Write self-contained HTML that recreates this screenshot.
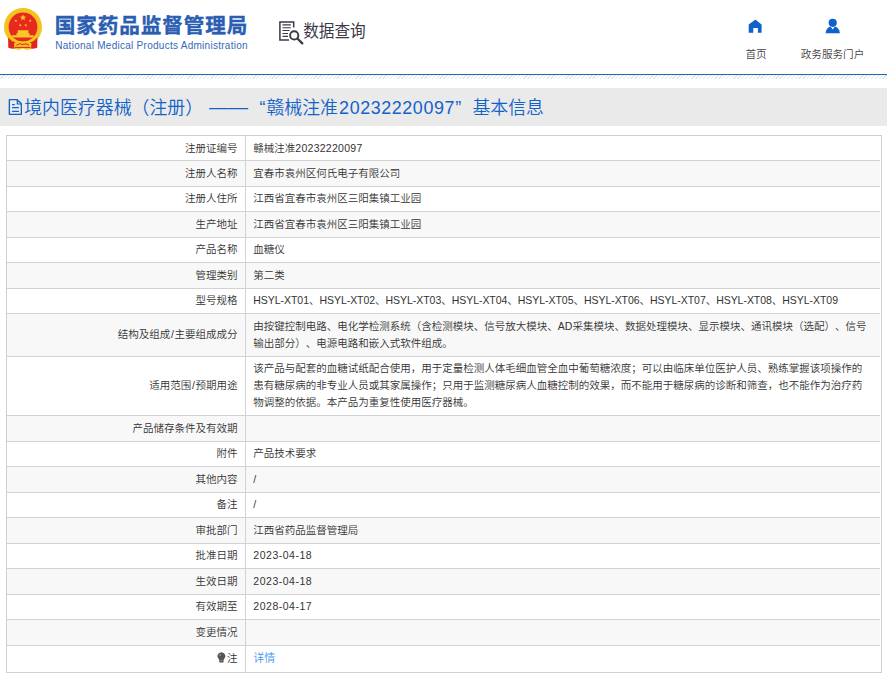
<!DOCTYPE html>
<html lang="zh-CN">
<head>
<meta charset="utf-8">
<title>境内医疗器械（注册）基本信息</title>
<style>
html,body{margin:0;padding:0;background:#fff;}
body{width:887px;height:678px;position:relative;overflow:hidden;font-family:"Liberation Sans","Noto Sans CJK SC",sans-serif;color:#333;text-spacing-trim:space-all;}
.abs{position:absolute;white-space:nowrap;}
#title{left:54.8px;top:10.4px;font-size:20.6px;line-height:32px;font-weight:bold;-webkit-text-stroke:0.4px #2a5eb2;color:#2a5eb2;letter-spacing:0.9px;}
#sub{left:55.3px;top:39.9px;font-size:10px;line-height:12px;color:#3468b8;letter-spacing:0.27px;}
#dq{left:303.2px;top:20px;font-size:15.65px;line-height:23px;color:#3a3a46;transform-origin:0 50%;transform:scaleY(1.09);}
.nav{font-size:10.6px;line-height:14px;color:#444;text-align:center;font-weight:350;}
#blue{left:0;top:73.7px;width:887px;height:1.5px;background:#1766c4;}
#hatch{left:0;top:75.2px;width:887px;height:3.9px;background:repeating-linear-gradient(135deg,#e5e5e5 0,#e5e5e5 0.95px,#fff 0.95px,#fff 2.7px);}
#band{left:0;top:87.7px;width:887px;height:37.9px;background:#eaeaea;}
#h1{left:0;top:93.8px;width:887px;height:28px;font-size:17.9px;line-height:28px;color:#1162c9;font-weight:350;margin:0;}
.hp{position:absolute;top:0;white-space:nowrap;}
.dash{top:-1.3px;display:inline-block;transform-origin:0 50%;transform:scaleX(1.092);}
.dg{letter-spacing:0.59px;}
#tbl{left:6.2px;top:134.95px;width:875.4px;height:537.8px;box-sizing:border-box;border:1.1px solid #cfcfcf;}
.r{position:absolute;left:7px;width:873px;display:flex;align-items:center;font-size:10.5px;line-height:17.2px;color:#333;font-weight:350;}
.k{width:238px;box-sizing:border-box;padding-right:7.5px;text-align:right;white-space:nowrap;}
.v{flex:1;padding-left:8.3px;white-space:nowrap;}
.hl{position:absolute;left:7px;width:873px;height:1.1px;background:#d2d2d2;}
#vl{left:244.95px;top:136px;width:1.15px;height:536px;background:#d2d2d2;}
.lnk{color:#3f97f2;font-size:11px;}
.dt{letter-spacing:0.52px;}
.d1{letter-spacing:0.27px;}
.hs{letter-spacing:-0.04px;}
.sl{margin:0 0.7px;}
.bulb{display:inline-block;vertical-align:-1.1px;margin-right:0.8px;}
</style>
</head>
<body>
<!-- header -->
<svg class="abs" style="left:0;top:4px" width="50" height="50" viewBox="0 0 50 50">
  <circle cx="23" cy="23" r="19" fill="#f4c31e"/>
  <circle cx="23" cy="23" r="14.4" fill="#e8291f"/>
  <path d="M17.7 26.2 H28.4 V29.1 H29.5 V31.3 H33.5 V33.5 H12.2 V31.3 H16.6 V29.1 H17.7Z" fill="#f6c927"/>
  <path d="M23 10.3 l.85 2.25 2.4 .1 -1.9 1.5 .65 2.3 -2-1.35 -2 1.35 .65-2.3 -1.9-1.5 2.4-.1z" fill="#f6c927"/>
  <path id="s" d="M15.9 15.3 l.4 1 1.1 .05 -.85 .7 .3 1.05 -.95-.6 -.95 .6 .3-1.05 -.85-.7 1.1-.05z" fill="#f6c927"/>
  <path d="M30.2 15.3 l.4 1 1.1 .05 -.85 .7 .3 1.05 -.95-.6 -.95 .6 .3-1.05 -.85-.7 1.1-.05z M20.3 19.7 l.4 1 1.1 .05 -.85 .7 .3 1.05 -.95-.6 -.95 .6 .3-1.05 -.85-.7 1.1-.05z M25.8 19.7 l.4 1 1.1 .05 -.85 .7 .3 1.05 -.95-.6 -.95 .6 .3-1.05 -.85-.7 1.1-.05z" fill="#f6c927"/>
  <path d="M8.1 33.6 Q11 37.4 15.5 38.6 L15.5 44.6 Q11.5 45 8.3 43.8Z M37.4 33.6 Q34.5 37.4 30 38.6 L30 44.6 Q34 45 37.2 43.8Z" fill="#e0251d"/>
  <path d="M14 39.5 Q18 36 22.8 37.8 Q27.5 36 31.5 39.5 L31 45.2 L26 45.7 L22.8 44.6 L19.5 45.7 L14.5 45.2Z" fill="#f4c31e"/>
  <path d="M16.5 41.2 Q19.5 38.6 22.8 40.6 Q26 38.6 29 41.2 M15 43.4 H30.5" stroke="#e0251d" stroke-width="1" fill="none"/>
</svg>
<div id="title" class="abs">国家药品监督管理局</div>
<div id="sub" class="abs">National Medical Products Administration</div>

<svg class="abs" style="left:278px;top:20px" width="27" height="26" viewBox="0 0 27 26" fill="none" stroke="#3a3a48">
  <path d="M15.7 7.5 V1.9 H1.9 V20 H11" stroke-width="1.5"/>
  <path d="M4.5 4.9 H12.8 M4.5 7.7 H12.8 M4.5 10.5 H11.5 M4.5 13.5 H10 M4.5 16.4 H10" stroke-width="1.1"/>
  <circle cx="16.2" cy="15.4" r="4.1" stroke-width="1.9" fill="#fff"/>
  <path d="M19.6 18.8 L24.3 23.4" stroke-width="2.3" stroke-linecap="round"/>
</svg>
<div id="dq" class="abs">数据查询</div>

<svg class="abs" style="left:748px;top:19px" width="15" height="14" viewBox="0 0 15 14">
  <path d="M7.4 0.7 Q7.6 0.7 8 1 L13.6 5.6 V13.7 H9.9 V8.9 H5.3 V13.7 H0.7 V5.6 L6.8 1 Q7.2 0.7 7.4 0.7Z" fill="#0f62c9"/>
</svg>
<div class="abs nav" style="left:735px;top:47px;width:42px">首页</div>
<svg class="abs" style="left:825px;top:18px" width="16" height="16" viewBox="0 0 16 16">
  <circle cx="7.7" cy="4.8" r="4.1" fill="#0f62c9"/>
  <path d="M0.6 15.2 Q1.2 9.6 5.6 8.6 L7.7 11.4 L9.8 8.6 Q14.2 9.6 14.9 15.2Z" fill="#0f62c9"/>
</svg>
<div class="abs nav" style="left:792px;top:47px;width:81px">政务服务门户</div>

<div id="blue" class="abs"></div>
<div id="hatch" class="abs"></div>
<div id="band" class="abs"></div>
<svg class="abs" style="left:8px;top:98px" width="16" height="18" viewBox="0 0 16 18" fill="none" stroke="#1162c9">
  <path d="M1.35 1.65 H9.2 L13.35 5.7 V16.35 H1.35Z" stroke-width="1.35" stroke-linejoin="round"/>
  <path d="M9.3 1.8 V6 H13.3" stroke-width="1.2"/>
  <path d="M4.1 6.5 H6.8 M4.1 9.5 H10.9 M4.1 13.4 H10.9" stroke-width="1.25"/>
</svg>
<h1 id="h1" class="abs"><span class="hp" style="left:24.2px">境内医疗器械（注册）</span><span class="hp dash" style="left:209.4px">——</span><span class="hp" style="left:259.4px">“</span><span class="hp" style="left:266.4px">赣械注准</span><span class="hp dg" style="left:339.1px">20232220097</span><span class="hp" style="left:455.2px">”</span><span class="hp" style="left:472.4px">基本信息</span></h1>

<!-- table -->
<div id="tbl" class="abs"></div>
<div class="r" style="top:135.95px;height:24.4px;background:#fff"><div class="k">注册证编号</div><div class="v">赣械注准<span class="d1">20232220097</span></div></div>
<div class="hl" style="top:160.35px"></div>
<div class="r" style="top:161.35px;height:24.45px;background:#f8f8f8"><div class="k">注册人名称</div><div class="v">宜春市袁州区何氏电子有限公司</div></div>
<div class="hl" style="top:185.8px"></div>
<div class="r" style="top:186.8px;height:24.35px;background:#fff"><div class="k">注册人住所</div><div class="v">江西省宜春市袁州区三阳集镇工业园</div></div>
<div class="hl" style="top:211.15px"></div>
<div class="r" style="top:212.15px;height:24.5px;background:#f8f8f8"><div class="k">生产地址</div><div class="v">江西省宜春市袁州区三阳集镇工业园</div></div>
<div class="hl" style="top:236.65px"></div>
<div class="r" style="top:237.65px;height:24.4px;background:#fff"><div class="k">产品名称</div><div class="v">血糖仪</div></div>
<div class="hl" style="top:262.05px"></div>
<div class="r" style="top:263.05px;height:24.5px;background:#f8f8f8"><div class="k">管理类别</div><div class="v">第二类</div></div>
<div class="hl" style="top:287.55px"></div>
<div class="r" style="top:288.55px;height:24.35px;background:#fff"><div class="k">型号规格</div><div class="v"><span class="hs">HSYL-XT01、HSYL-XT02、HSYL-XT03、HSYL-XT04、HSYL-XT05、HSYL-XT06、HSYL-XT07、HSYL-XT08、HSYL-XT09</span></div></div>
<div class="hl" style="top:312.9px"></div>
<div class="r" style="top:313.9px;height:41.95px;background:#f8f8f8"><div class="k">结构及组成<span class="sl">/</span>主要组成成分</div><div class="v">由按键控制电路、电化学检测系统（含检测模块、信号放大模块、AD采集模块、数据处理模块、显示模块、通讯模块（选配）、信号<br>输出部分）、电源电路和嵌入式软件组成。</div></div>
<div class="hl" style="top:355.85px"></div>
<div class="r" style="top:356.85px;height:57.95px;background:#fff"><div class="k">适用范围<span class="sl">/</span>预期用途</div><div class="v">该产品与配套的血糖试纸配合使用，用于定量检测人体毛细血管全血中葡萄糖浓度；可以由临床单位医护人员、熟练掌握该项操作的<br>患有糖尿病的非专业人员或其家属操作；只用于监测糖尿病人血糖控制的效果，而不能用于糖尿病的诊断和筛查，也不能作为治疗药<br>物调整的依据。本产品为重复性使用医疗器械。</div></div>
<div class="hl" style="top:414.8px"></div>
<div class="r" style="top:415.8px;height:24.85px;background:#f8f8f8"><div class="k">产品储存条件及有效期</div><div class="v"></div></div>
<div class="hl" style="top:440.65px"></div>
<div class="r" style="top:441.65px;height:24.3px;background:#fff"><div class="k">附件</div><div class="v">产品技术要求</div></div>
<div class="hl" style="top:465.95px"></div>
<div class="r" style="top:466.95px;height:24.8px;background:#f8f8f8"><div class="k">其他内容</div><div class="v">/</div></div>
<div class="hl" style="top:491.75px"></div>
<div class="r" style="top:492.75px;height:24.2px;background:#fff"><div class="k">备注</div><div class="v">/</div></div>
<div class="hl" style="top:516.95px"></div>
<div class="r" style="top:517.95px;height:24.9px;background:#f8f8f8"><div class="k">审批部门</div><div class="v">江西省药品监督管理局</div></div>
<div class="hl" style="top:542.85px"></div>
<div class="r" style="top:543.85px;height:24.1px;background:#fff"><div class="k">批准日期</div><div class="v"><span class="dt">2023-04-18</span></div></div>
<div class="hl" style="top:567.95px"></div>
<div class="r" style="top:568.95px;height:24.8px;background:#f8f8f8"><div class="k">生效日期</div><div class="v"><span class="dt">2023-04-18</span></div></div>
<div class="hl" style="top:593.75px"></div>
<div class="r" style="top:594.75px;height:24.1px;background:#fff"><div class="k">有效期至</div><div class="v"><span class="dt">2028-04-17</span></div></div>
<div class="hl" style="top:618.85px"></div>
<div class="r" style="top:619.85px;height:24.9px;background:#f8f8f8"><div class="k">变更情况</div><div class="v"></div></div>
<div class="hl" style="top:644.75px"></div>
<div class="r" style="top:645.75px;height:25.9px;background:#fff"><div class="k"><svg class="bulb" width="9" height="11" viewBox="0 0 9 11"><path d="M4.4 0.2 A3.9 3.9 0 0 1 6.9 7.1 L6.4 10.4 H2.4 L1.9 7.1 A3.9 3.9 0 0 1 4.4 0.2Z" fill="#555"/><circle cx="3.1" cy="2.9" r="0.9" fill="#999"/><path d="M2.3 8.5 H6.5" stroke="#aaa" stroke-width="0.5"/></svg>注</div><div class="v"><span class="lnk">详情</span></div></div>
<div class="hl" style="top:671.65px"></div>
<div id="vl" class="abs"></div>
</body>
</html>
